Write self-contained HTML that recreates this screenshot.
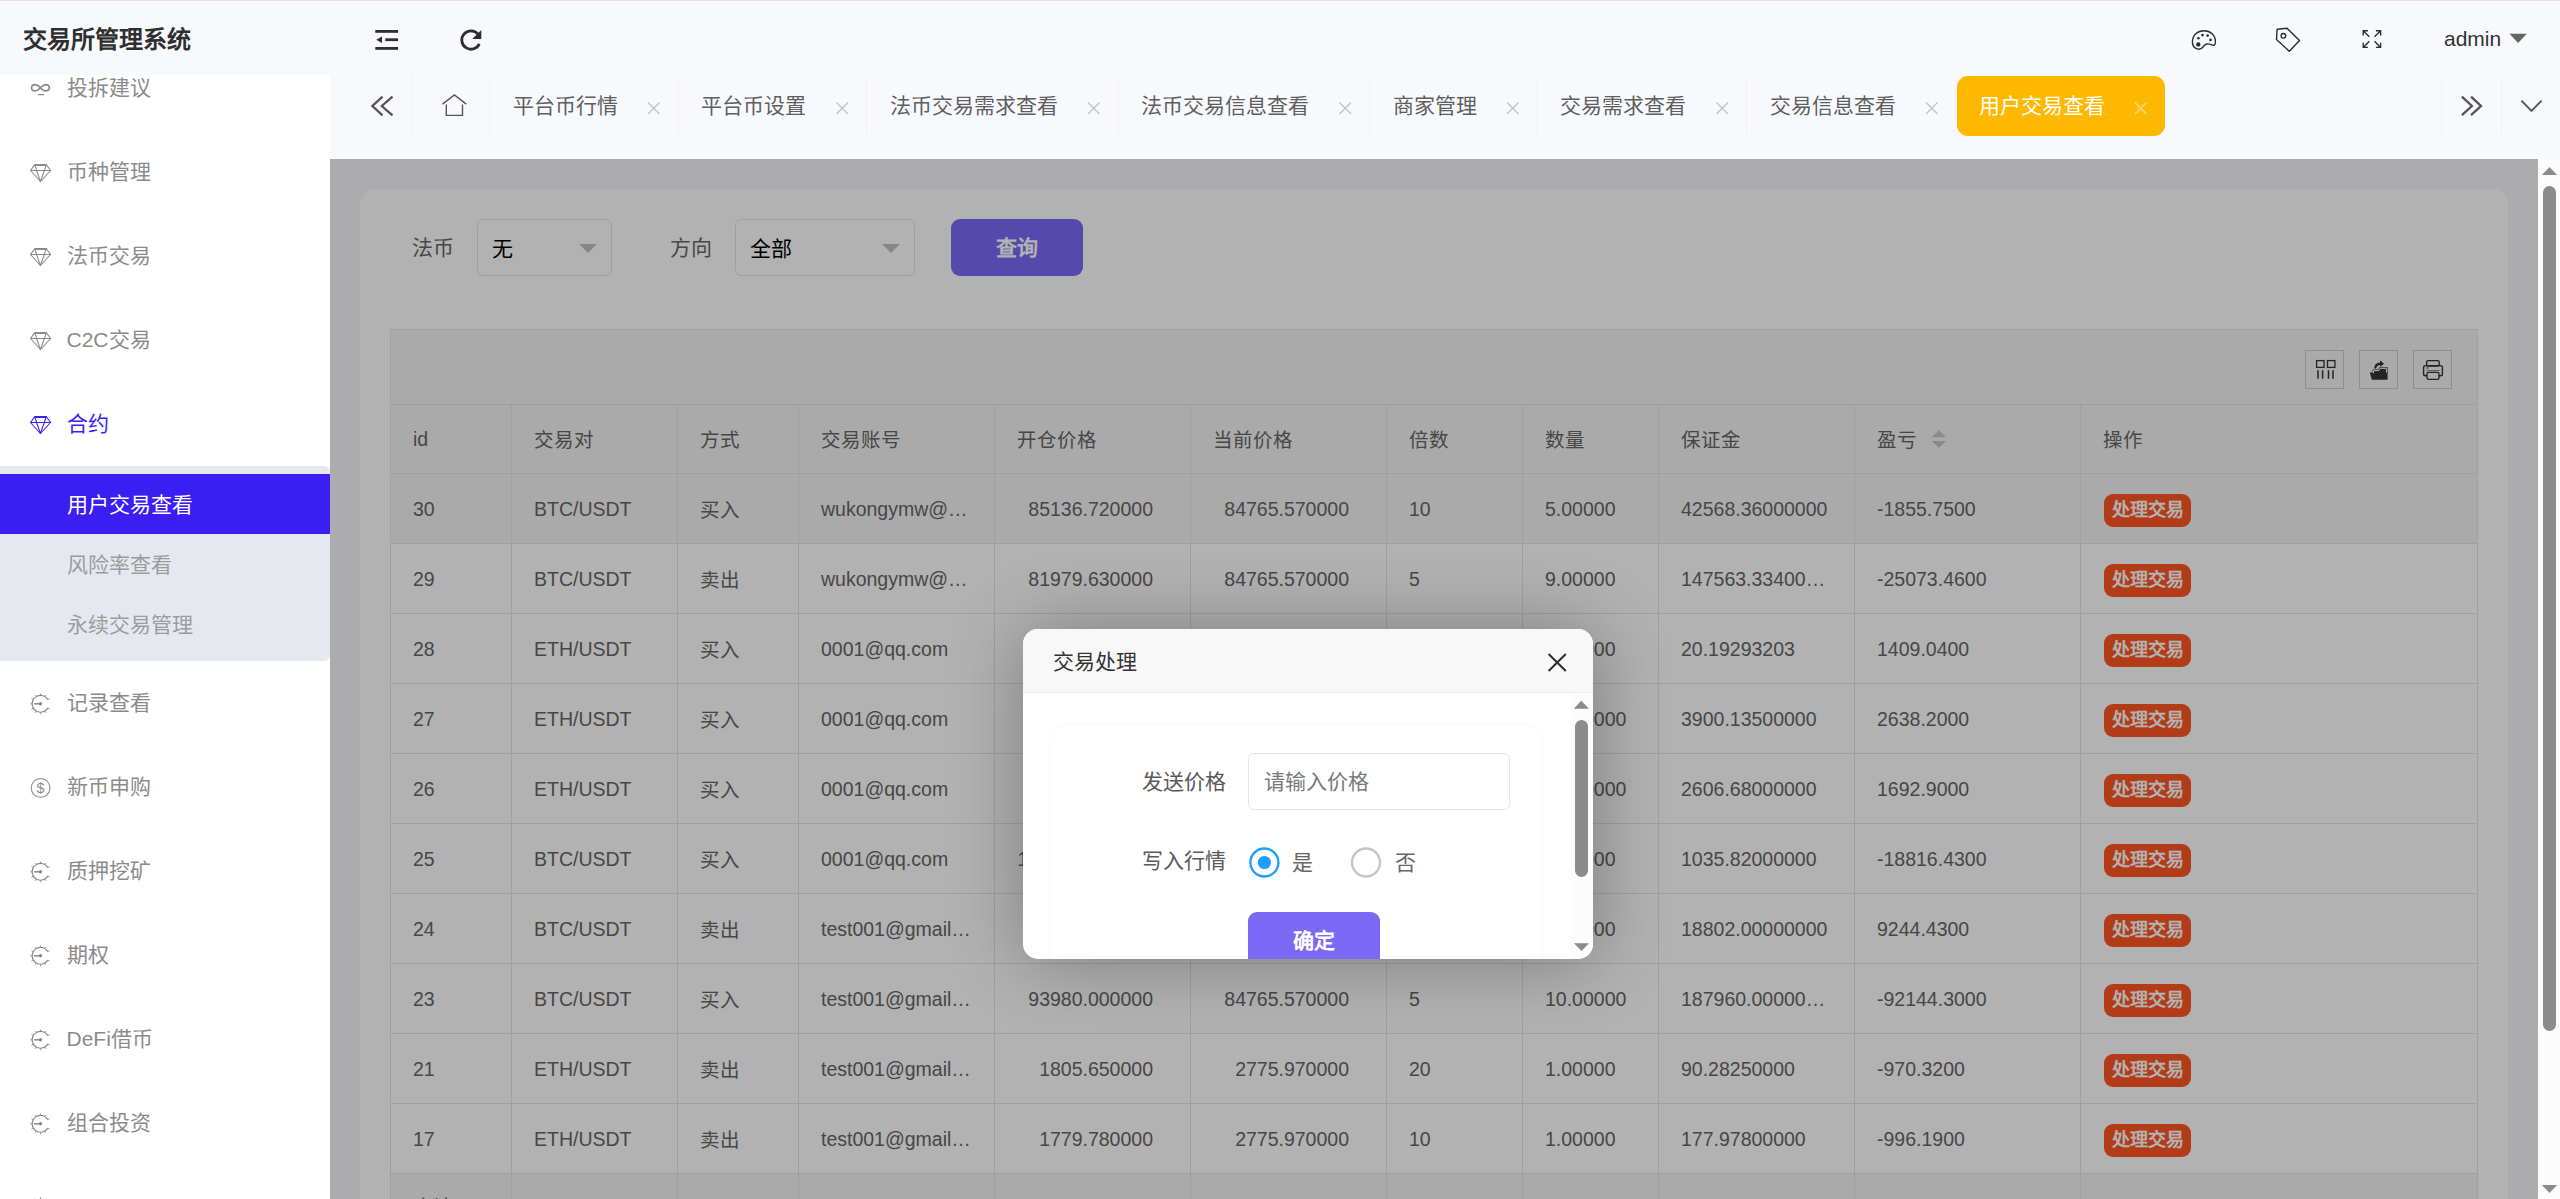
<!DOCTYPE html>
<html lang="zh-CN">
<head>
<meta charset="utf-8">
<title>交易所管理系统</title>
<style>
*{box-sizing:border-box;margin:0;padding:0}
html,body{width:2560px;height:1199px;overflow:hidden;background:#f8f9fd}
body{position:relative;font-family:"Liberation Sans",sans-serif;font-size:21px;color:#666;line-height:1}
.abs{position:absolute}
svg{display:block;overflow:visible}
.t{position:absolute;white-space:nowrap;line-height:30px;height:30px}

/* ---------- top ---------- */
#topline{position:absolute;left:0;top:0;width:2560px;height:1px;background:#f3dadb;z-index:50}
#topline2{position:absolute;left:0;top:1px;width:2560px;height:1px;background:#f9fcfe;z-index:50}
#logo{position:absolute;left:0;top:0;width:330px;height:75px;background:#f8f9fd;z-index:5}
#logo span{position:absolute;left:23px;top:25px;line-height:30px;font-size:24px;font-weight:bold;color:#2f2f2f;white-space:nowrap}
#header{position:absolute;left:0;top:0;width:2560px;height:159px;background:#f8f9fd}
#header .tab{color:#5f5f5f}
#acttab{position:absolute;left:1957px;top:76px;width:208px;height:60px;border-radius:11px;background:#ffb800}

/* ---------- sidebar ---------- */
#side{position:absolute;left:0;top:75px;width:330px;height:1124px;background:#fff;overflow:hidden}
#sg{position:absolute;left:0;top:-75px;width:330px;height:1199px}
.mi{position:absolute;left:66.5px;height:30px;line-height:30px;color:#8b8b8b;font-size:21px;white-space:nowrap}
.mi.on{color:#3a1ef2}
#sub{position:absolute;left:0;top:466px;width:330px;height:194.5px;background:#e6e8f0;border-radius:0 6px 6px 0}
.si{position:absolute;left:0;width:330px;height:60px;line-height:61px;color:#9c9c9c;white-space:nowrap;padding-left:66.5px}
.si.on{background:#3b1ff2;color:#fff}

/* ---------- frame ---------- */
#frame{position:absolute;left:330px;top:159px;width:2208px;height:1040px;overflow:hidden;background:#f7f7fa}
#g{position:absolute;left:-330px;top:-159px;width:2560px;height:1199px}
#card{position:absolute;left:360px;top:188.5px;width:2148px;height:1200px;background:#fff;border-radius:15px}
#shade{position:absolute;left:330px;top:159px;width:2208px;height:1040px;background:rgba(0,0,0,.3)}
#vscroll{position:absolute;left:2538px;top:159px;width:22px;height:1040px;background:#fcfcfc}

.sel{position:absolute;top:219px;height:57px;border:1px solid #e6e6e6;border-radius:6px;background:#fff;color:#000}
.sel span{position:absolute;left:14px;top:14px;line-height:30px}
.sel i{position:absolute;right:14px;top:24px;width:0;height:0;border-left:9px solid transparent;border-right:9px solid transparent;border-top:9px solid #c2c2c2}
.btn{position:absolute;background:#7a69f6;color:#fff;font-weight:bold;text-align:center;border-radius:9px}

/* ---------- table ---------- */
#tb{position:absolute;left:390px;top:329px;width:2088px;height:900px;border:1px solid #e6e6e6;border-bottom:none;background:#fff}
#tool{position:absolute;left:0;top:0;width:2086px;height:75px;background:#f4f4f4;border-bottom:1px solid #e6e6e6}
.tbx{position:absolute;top:21px;width:39px;height:39px;border:1px solid #ccc}
.row{position:absolute;left:0;width:2086px;height:70px;border-bottom:1px solid #e6e6e6;background:#fff}
.row.h,.row.hv{background:#f4f4f4}
.row.hd{height:69px}
.row.hd .c{height:68px;line-height:68px}
.row.hd .c.z{line-height:71px}
.c{position:absolute;top:0;height:69px;line-height:70px;font-size:19.5px;border-right:1px solid #e6e6e6;padding:0 22px;white-space:nowrap;overflow:hidden;color:#666}
.c.r{text-align:right;padding-right:37px}
.c.z{line-height:72px}
.c:last-child{border-right:none}
.ob{position:absolute;left:23px;top:20px;width:87px;height:33px;line-height:33px;border-radius:9px;background:#ff5722;color:#fff;font-size:18px;font-weight:bold;text-align:center}

/* ---------- modal ---------- */
#modal{position:absolute;left:1023px;top:629px;width:570px;height:330px;border-radius:15px;background:#fff;overflow:hidden;box-shadow:1.5px 1.5px 75px rgba(0,0,0,.3)}
#mg{position:absolute;left:-1023px;top:-629px;width:2560px;height:1199px}
#mtitle{position:absolute;left:1023px;top:629px;width:570px;height:64px;background:#f8f8f8;border-bottom:1px solid #eee}
</style>
</head>
<body>
<div id="header">
  <div id="acttab"></div>
  <!-- tab labels -->
  <div class="t tab" style="left:512.5px;top:91px">平台币行情</div>
  <div class="t tab" style="left:701px;top:91px">平台币设置</div>
  <div class="t tab" style="left:889.5px;top:91px">法币交易需求查看</div>
  <div class="t tab" style="left:1141px;top:91px">法币交易信息查看</div>
  <div class="t tab" style="left:1392.5px;top:91px">商家管理</div>
  <div class="t tab" style="left:1560px;top:91px">交易需求查看</div>
  <div class="t tab" style="left:1769.5px;top:91px">交易信息查看</div>
  <div class="t" style="left:1979px;top:91px;color:#fff">用户交易查看</div>
  <div class="t" style="left:2444px;top:24px;color:#333">admin</div>
  <svg class="abs" style="left:0;top:0" width="2560" height="159" viewBox="0 0 2560 159">
    <!-- menu fold -->
    <g fill="#2f2f2f">
      <rect x="375.3" y="30" width="22.8" height="2.8"/>
      <rect x="385.3" y="38.3" width="12.8" height="2.8"/>
      <rect x="375.3" y="47" width="22.8" height="2.8"/>
      <path d="M376.2 39.8L382 36.5V43.1Z"/>
    </g>
    <!-- refresh -->
    <path d="M479.34 43.89A9.2 9.2 0 1 1 478.05 34.09" fill="none" stroke="#2f2f2f" stroke-width="2.8"/>
    <path d="M481.3 30V39H472.2Z" fill="#2f2f2f"/>
    <!-- palette -->
    <g fill="none" stroke="#2b2b33" stroke-width="1.4" stroke-linejoin="round">
      <path d="M2199 49.3C2194.2 49.3 2192.4 45 2192.4 42C2192.4 35.2 2197.6 30.8 2204 30.8C2210.4 30.8 2215.4 35.4 2215.4 41.4C2215.4 43.4 2215 44.8 2214.4 45.2C2212 45.6 2210 43.2 2206.6 44C2203 45 2203 49.3 2199 49.3Z"/>
    </g>
    <g fill="#2b2b33">
      <circle cx="2198.4" cy="38.2" r="1.3"/><circle cx="2202.5" cy="35.1" r="1.3"/>
      <circle cx="2207.7" cy="35.6" r="1.3"/><circle cx="2210.5" cy="39.9" r="1.3"/>
      <circle cx="2198.3" cy="44.4" r="2.2"/>
    </g>
    <!-- tag -->
    <g fill="none" stroke="#2b2b33" stroke-width="1.4" stroke-linejoin="round">
      <path d="M2277.1 29.3L2287 28.3L2299.5 40.5L2289.3 51.3L2276.5 39.6Z"/>
      <circle cx="2283.4" cy="35.8" r="2.3"/>
    </g>
    <!-- fullscreen -->
    <g fill="none" stroke="#2b2b33" stroke-width="1.35">
      <path d="M2369.3 36.7L2363.2 30.7M2363.2 35.4V30.7H2367.9"/>
      <path d="M2374.5 36.7L2380.6 30.7M2375.9 30.7H2380.6V35.4"/>
      <path d="M2369.3 41.3L2363.2 47.4M2363.2 42.7V47.4H2367.9"/>
      <path d="M2374.5 41.3L2380.6 47.4M2375.9 47.4H2380.6V42.7"/>
    </g>
    <!-- admin caret -->
    <path d="M2509.5 33.8H2526.8L2518.1 43Z" fill="#666"/>
    <!-- separators -->
    <g stroke="#f2f2f5" stroke-width="1">
      <path d="M412.5 76V135M489.5 76V135M678 76V135M866.5 76V135M1118.5 76V135M1369.5 76V135M1537 76V135M1746.5 76V135M2441.5 76V135M2501.5 76V135"/>
    </g>
    <!-- << >> v -->
    <g fill="none" stroke="#555" stroke-width="2.3">
      <path d="M382.5 96.6L372.4 106L382.5 115.4M392.5 96.6L381.8 106L392.5 115.4"/>
      <path d="M2461.9 96.6L2471.9 106L2461.9 115.2M2471 96.6L2481 106L2471 115.2"/>
    </g>
    <path d="M2521.4 100.6L2531.5 111L2541.6 100.6" fill="none" stroke="#555" stroke-width="1.9"/>
    <!-- home -->
    <g fill="none" stroke="#555" stroke-width="1.4">
      <path d="M442.5 104.1L454.4 95L466.3 104.1"/>
      <path d="M446.3 104.4V115.4H462.5V104.4"/>
    </g>
    <!-- tab close icons -->
    <g fill="none" stroke="#b9c2c9" stroke-width="1.15">
      <path d="M648 102.5L659.5 114M659.5 102.5L648 114"/>
      <path d="M836.5 102.5L848 114M848 102.5L836.5 114"/>
      <path d="M1088 102.5L1099.5 114M1099.5 102.5L1088 114"/>
      <path d="M1339.5 102.5L1351 114M1351 102.5L1339.5 114"/>
      <path d="M1507 102.5L1518.5 114M1518.5 102.5L1507 114"/>
      <path d="M1716.5 102.5L1728 114M1728 102.5L1716.5 114"/>
      <path d="M1926 102.5L1937.5 114M1937.5 102.5L1926 114"/>
    </g>
    <path d="M2135 102.5L2146.5 114M2146.5 102.5L2135 114" fill="none" stroke="#ecdc9a" stroke-width="1.3"/>
  </svg>
</div>
<div id="topline"></div><div id="topline2"></div>
<div id="logo"><span>交易所管理系统</span></div>
<div id="side"><div id="sg">
<div id="sub"></div>
<div class="si on" style="top:474px">用户交易查看</div>
<div class="si" style="top:534px">风险率查看</div>
<div class="si" style="top:594px">永续交易管理</div>
<div class="mi" style="top:73px">投拆建议</div>
<div class="mi" style="top:157px">币种管理</div>
<div class="mi" style="top:241px">法币交易</div>
<div class="mi" style="top:325px">C2C交易</div>
<div class="mi on" style="top:409px">合约</div>
<div class="mi" style="top:688px">记录查看</div>
<div class="mi" style="top:772px">新币申购</div>
<div class="mi" style="top:856px">质押挖矿</div>
<div class="mi" style="top:940px">期权</div>
<div class="mi" style="top:1024px">DeFi借币</div>
<div class="mi" style="top:1108px">组合投资</div>
<svg class="abs" style="left:0;top:0" width="330" height="1199" viewBox="0 0 330 1199" fill="none" stroke-linecap="butt">
<path d="M31.6 87.8C31.6 85.6 33.3 84.7 35.3 84.7C38.6 84.7 42.2 90.89999999999999 45.6 90.89999999999999C47.6 90.89999999999999 49.3 89.89999999999999 49.3 87.8C49.3 85.6 47.6 84.7 45.6 84.7C42.2 84.7 38.6 90.89999999999999 35.3 90.89999999999999C33.3 90.89999999999999 31.6 89.89999999999999 31.6 87.8Z" stroke="#8b8b8b" stroke-width="1.7"/>
<path d="M37.8 94.6H44" stroke="#8b8b8b" stroke-width="1.3"/>
<g stroke="#8b8b8b" stroke-width="1.05" stroke-linejoin="round"><path d="M34.8 164.6H46.3L50.6 170.5L40.4 181.5L30.5 170.5Z"/><path d="M30.5 170.5H50.6M34.8 164.6L36.6 170.5L40.4 181.5L44.3 170.5L46.3 164.6"/><path d="M34.8 165.4H46.3" stroke-width="1.2"/></g>
<g stroke="#8b8b8b" stroke-width="1.05" stroke-linejoin="round"><path d="M34.8 248.6H46.3L50.6 254.5L40.4 265.5L30.5 254.5Z"/><path d="M30.5 254.5H50.6M34.8 248.6L36.6 254.5L40.4 265.5L44.3 254.5L46.3 248.6"/><path d="M34.8 249.4H46.3" stroke-width="1.2"/></g>
<g stroke="#8b8b8b" stroke-width="1.05" stroke-linejoin="round"><path d="M34.8 332.6H46.3L50.6 338.5L40.4 349.5L30.5 338.5Z"/><path d="M30.5 338.5H50.6M34.8 332.6L36.6 338.5L40.4 349.5L44.3 338.5L46.3 332.6"/><path d="M34.8 333.40000000000003H46.3" stroke-width="1.2"/></g>
<g stroke="#3a1ef2" stroke-width="1.05" stroke-linejoin="round"><path d="M34.8 416.6H46.3L50.6 422.5L40.4 433.5L30.5 422.5Z"/><path d="M30.5 422.5H50.6M34.8 416.6L36.6 422.5L40.4 433.5L44.3 422.5L46.3 416.6"/><path d="M34.8 417.40000000000003H46.3" stroke-width="1.2"/></g>
<g stroke="#8b8b8b" stroke-width="1.12"><path d="M47.82 699.60A8.4 8.4 0 1 0 47.82 708.00"/><path d="M47.82 708.00L49.56 709.00M44.75 711.07L45.75 712.81M40.55 712.20L40.55 714.20M36.35 711.07L35.35 712.81M33.28 708.00L31.54 709.00M32.15 703.80L30.15 703.80M33.28 699.60L31.54 698.60M36.35 696.53L35.35 694.79M40.55 695.40L40.55 693.40M44.75 696.53L45.75 694.79M47.82 699.60L49.56 698.60" stroke-width="0.9"/><path d="M33.9 703.8H40.4" stroke-width="1.5"/></g><circle cx="40.5" cy="703.8" r="1.7" fill="#8b8b8b"/>
<circle cx="40.6" cy="787.9" r="9.4" stroke="#8b8b8b" stroke-width="1.05"/>
<text x="40.6" y="793.1" text-anchor="middle" font-family="Liberation Sans, sans-serif" font-size="14.5" fill="#8b8b8b" stroke="none">$</text>
<g stroke="#8b8b8b" stroke-width="1.12"><path d="M47.82 867.60A8.4 8.4 0 1 0 47.82 876.00"/><path d="M47.82 876.00L49.56 877.00M44.75 879.07L45.75 880.81M40.55 880.20L40.55 882.20M36.35 879.07L35.35 880.81M33.28 876.00L31.54 877.00M32.15 871.80L30.15 871.80M33.28 867.60L31.54 866.60M36.35 864.53L35.35 862.79M40.55 863.40L40.55 861.40M44.75 864.53L45.75 862.79M47.82 867.60L49.56 866.60" stroke-width="0.9"/><path d="M33.9 871.8H40.4" stroke-width="1.5"/></g><circle cx="40.5" cy="871.8" r="1.7" fill="#8b8b8b"/>
<g stroke="#8b8b8b" stroke-width="1.12"><path d="M47.82 951.60A8.4 8.4 0 1 0 47.82 960.00"/><path d="M47.82 960.00L49.56 961.00M44.75 963.07L45.75 964.81M40.55 964.20L40.55 966.20M36.35 963.07L35.35 964.81M33.28 960.00L31.54 961.00M32.15 955.80L30.15 955.80M33.28 951.60L31.54 950.60M36.35 948.53L35.35 946.79M40.55 947.40L40.55 945.40M44.75 948.53L45.75 946.79M47.82 951.60L49.56 950.60" stroke-width="0.9"/><path d="M33.9 955.8H40.4" stroke-width="1.5"/></g><circle cx="40.5" cy="955.8" r="1.7" fill="#8b8b8b"/>
<g stroke="#8b8b8b" stroke-width="1.12"><path d="M47.82 1035.60A8.4 8.4 0 1 0 47.82 1044.00"/><path d="M47.82 1044.00L49.56 1045.00M44.75 1047.07L45.75 1048.81M40.55 1048.20L40.55 1050.20M36.35 1047.07L35.35 1048.81M33.28 1044.00L31.54 1045.00M32.15 1039.80L30.15 1039.80M33.28 1035.60L31.54 1034.60M36.35 1032.53L35.35 1030.79M40.55 1031.40L40.55 1029.40M44.75 1032.53L45.75 1030.79M47.82 1035.60L49.56 1034.60" stroke-width="0.9"/><path d="M33.9 1039.8H40.4" stroke-width="1.5"/></g><circle cx="40.5" cy="1039.8" r="1.7" fill="#8b8b8b"/>
<g stroke="#8b8b8b" stroke-width="1.12"><path d="M47.82 1119.60A8.4 8.4 0 1 0 47.82 1128.00"/><path d="M47.82 1128.00L49.56 1129.00M44.75 1131.07L45.75 1132.81M40.55 1132.20L40.55 1134.20M36.35 1131.07L35.35 1132.81M33.28 1128.00L31.54 1129.00M32.15 1123.80L30.15 1123.80M33.28 1119.60L31.54 1118.60M36.35 1116.53L35.35 1114.79M40.55 1115.40L40.55 1113.40M44.75 1116.53L45.75 1114.79M47.82 1119.60L49.56 1118.60" stroke-width="0.9"/><path d="M33.9 1123.8H40.4" stroke-width="1.5"/></g><circle cx="40.5" cy="1123.8" r="1.7" fill="#8b8b8b"/>
<g stroke="#8b8b8b" stroke-width="1.12"><path d="M47.82 1203.60A8.4 8.4 0 1 0 47.82 1212.00"/><path d="M47.82 1212.00L49.56 1213.00M44.75 1215.07L45.75 1216.81M40.55 1216.20L40.55 1218.20M36.35 1215.07L35.35 1216.81M33.28 1212.00L31.54 1213.00M32.15 1207.80L30.15 1207.80M33.28 1203.60L31.54 1202.60M36.35 1200.53L35.35 1198.79M40.55 1199.40L40.55 1197.40M44.75 1200.53L45.75 1198.79M47.82 1203.60L49.56 1202.60" stroke-width="0.9"/><path d="M33.9 1207.8H40.4" stroke-width="1.5"/></g><circle cx="40.5" cy="1207.8" r="1.7" fill="#8b8b8b"/>
</svg>
</div></div>
<div id="frame"><div id="g">
<div id="card"></div>
<div class="t" style="left:412px;top:233px;color:#666">法币</div>
<div class="sel" style="left:477px;width:135px"><span>无</span><i></i></div>
<div class="t" style="left:670px;top:233px;color:#666">方向</div>
<div class="sel" style="left:735px;width:180px"><span>全部</span><i></i></div>
<div class="btn" style="left:951px;top:219px;width:132px;height:57px;line-height:57px">查询</div>
<div id="tb"><div id="tool">
<div class="tbx" style="left:1914px;top:20px"></div>
<div class="tbx" style="left:1968px;top:20px"></div>
<div class="tbx" style="left:2022px;top:20px"></div>
</div>
<div class="row h hd" style="top:75px"><div class="c" style="left:0px;width:121px">id</div><div class="c z" style="left:121px;width:166px">交易对</div><div class="c z" style="left:287px;width:121px">方式</div><div class="c z" style="left:408px;width:196px">交易账号</div><div class="c z" style="left:604px;width:196px">开仓价格</div><div class="c z" style="left:800px;width:196px">当前价格</div><div class="c z" style="left:996px;width:136px">倍数</div><div class="c z" style="left:1132px;width:136px">数量</div><div class="c z" style="left:1268px;width:196px">保证金</div><div class="c z" style="left:1464px;width:226px">盈亏</div><div class="c z" style="left:1690px;width:396px">操作</div></div>
<div class="row hv" style="top:144px"><div class="c" style="left:0px;width:121px">30</div><div class="c" style="left:121px;width:166px">BTC/USDT</div><div class="c z" style="left:287px;width:121px">买入</div><div class="c" style="left:408px;width:196px;text-overflow:ellipsis">wukongymw@gmail.com</div><div class="c r" style="left:604px;width:196px">85136.720000</div><div class="c r" style="left:800px;width:196px">84765.570000</div><div class="c" style="left:996px;width:136px">10</div><div class="c" style="left:1132px;width:136px">5.00000</div><div class="c" style="left:1268px;width:196px;text-overflow:ellipsis">42568.36000000</div><div class="c" style="left:1464px;width:226px">-1855.7500</div><div class="c" style="left:1690px;width:396px"><span class="ob">处理交易</span></div></div>
<div class="row" style="top:214px"><div class="c" style="left:0px;width:121px">29</div><div class="c" style="left:121px;width:166px">BTC/USDT</div><div class="c z" style="left:287px;width:121px">卖出</div><div class="c" style="left:408px;width:196px;text-overflow:ellipsis">wukongymw@gmail.com</div><div class="c r" style="left:604px;width:196px">81979.630000</div><div class="c r" style="left:800px;width:196px">84765.570000</div><div class="c" style="left:996px;width:136px">5</div><div class="c" style="left:1132px;width:136px">9.00000</div><div class="c" style="left:1268px;width:196px;text-overflow:ellipsis">147563.33400000</div><div class="c" style="left:1464px;width:226px">-25073.4600</div><div class="c" style="left:1690px;width:396px"><span class="ob">处理交易</span></div></div>
<div class="row" style="top:284px"><div class="c" style="left:0px;width:121px">28</div><div class="c" style="left:121px;width:166px">ETH/USDT</div><div class="c z" style="left:287px;width:121px">买入</div><div class="c" style="left:408px;width:196px;text-overflow:ellipsis">0001@qq.com</div><div class="c r" style="left:604px;width:196px">2019.293203</div><div class="c r" style="left:800px;width:196px">2775.970000</div><div class="c" style="left:996px;width:136px">100</div><div class="c" style="left:1132px;width:136px">1.00000</div><div class="c" style="left:1268px;width:196px;text-overflow:ellipsis">20.19293203</div><div class="c" style="left:1464px;width:226px">1409.0400</div><div class="c" style="left:1690px;width:396px"><span class="ob">处理交易</span></div></div>
<div class="row" style="top:354px"><div class="c" style="left:0px;width:121px">27</div><div class="c" style="left:121px;width:166px">ETH/USDT</div><div class="c z" style="left:287px;width:121px">买入</div><div class="c" style="left:408px;width:196px;text-overflow:ellipsis">0001@qq.com</div><div class="c r" style="left:604px;width:196px">2512.150000</div><div class="c r" style="left:800px;width:196px">2775.970000</div><div class="c" style="left:996px;width:136px">5</div><div class="c" style="left:1132px;width:136px">10.00000</div><div class="c" style="left:1268px;width:196px;text-overflow:ellipsis">3900.13500000</div><div class="c" style="left:1464px;width:226px">2638.2000</div><div class="c" style="left:1690px;width:396px"><span class="ob">处理交易</span></div></div>
<div class="row" style="top:424px"><div class="c" style="left:0px;width:121px">26</div><div class="c" style="left:121px;width:166px">ETH/USDT</div><div class="c z" style="left:287px;width:121px">买入</div><div class="c" style="left:408px;width:196px;text-overflow:ellipsis">0001@qq.com</div><div class="c r" style="left:604px;width:196px">2606.680000</div><div class="c r" style="left:800px;width:196px">2775.970000</div><div class="c" style="left:996px;width:136px">10</div><div class="c" style="left:1132px;width:136px">10.00000</div><div class="c" style="left:1268px;width:196px;text-overflow:ellipsis">2606.68000000</div><div class="c" style="left:1464px;width:226px">1692.9000</div><div class="c" style="left:1690px;width:396px"><span class="ob">处理交易</span></div></div>
<div class="row" style="top:494px"><div class="c" style="left:0px;width:121px">25</div><div class="c" style="left:121px;width:166px">BTC/USDT</div><div class="c z" style="left:287px;width:121px">买入</div><div class="c" style="left:408px;width:196px;text-overflow:ellipsis">0001@qq.com</div><div class="c r" style="left:604px;width:196px">103582.000000</div><div class="c r" style="left:800px;width:196px">84765.570000</div><div class="c" style="left:996px;width:136px">100</div><div class="c" style="left:1132px;width:136px">1.00000</div><div class="c" style="left:1268px;width:196px;text-overflow:ellipsis">1035.82000000</div><div class="c" style="left:1464px;width:226px">-18816.4300</div><div class="c" style="left:1690px;width:396px"><span class="ob">处理交易</span></div></div>
<div class="row" style="top:564px"><div class="c" style="left:0px;width:121px">24</div><div class="c" style="left:121px;width:166px">BTC/USDT</div><div class="c z" style="left:287px;width:121px">卖出</div><div class="c" style="left:408px;width:196px;text-overflow:ellipsis">test001@gmail.com</div><div class="c r" style="left:604px;width:196px">94010.000000</div><div class="c r" style="left:800px;width:196px">84765.570000</div><div class="c" style="left:996px;width:136px">10</div><div class="c" style="left:1132px;width:136px">2.00000</div><div class="c" style="left:1268px;width:196px;text-overflow:ellipsis">18802.00000000</div><div class="c" style="left:1464px;width:226px">9244.4300</div><div class="c" style="left:1690px;width:396px"><span class="ob">处理交易</span></div></div>
<div class="row" style="top:634px"><div class="c" style="left:0px;width:121px">23</div><div class="c" style="left:121px;width:166px">BTC/USDT</div><div class="c z" style="left:287px;width:121px">买入</div><div class="c" style="left:408px;width:196px;text-overflow:ellipsis">test001@gmail.com</div><div class="c r" style="left:604px;width:196px">93980.000000</div><div class="c r" style="left:800px;width:196px">84765.570000</div><div class="c" style="left:996px;width:136px">5</div><div class="c" style="left:1132px;width:136px">10.00000</div><div class="c" style="left:1268px;width:196px;text-overflow:ellipsis">187960.00000000</div><div class="c" style="left:1464px;width:226px">-92144.3000</div><div class="c" style="left:1690px;width:396px"><span class="ob">处理交易</span></div></div>
<div class="row" style="top:704px"><div class="c" style="left:0px;width:121px">21</div><div class="c" style="left:121px;width:166px">ETH/USDT</div><div class="c z" style="left:287px;width:121px">卖出</div><div class="c" style="left:408px;width:196px;text-overflow:ellipsis">test001@gmail.com</div><div class="c r" style="left:604px;width:196px">1805.650000</div><div class="c r" style="left:800px;width:196px">2775.970000</div><div class="c" style="left:996px;width:136px">20</div><div class="c" style="left:1132px;width:136px">1.00000</div><div class="c" style="left:1268px;width:196px;text-overflow:ellipsis">90.28250000</div><div class="c" style="left:1464px;width:226px">-970.3200</div><div class="c" style="left:1690px;width:396px"><span class="ob">处理交易</span></div></div>
<div class="row" style="top:774px"><div class="c" style="left:0px;width:121px">17</div><div class="c" style="left:121px;width:166px">ETH/USDT</div><div class="c z" style="left:287px;width:121px">卖出</div><div class="c" style="left:408px;width:196px;text-overflow:ellipsis">test001@gmail.com</div><div class="c r" style="left:604px;width:196px">1779.780000</div><div class="c r" style="left:800px;width:196px">2775.970000</div><div class="c" style="left:996px;width:136px">10</div><div class="c" style="left:1132px;width:136px">1.00000</div><div class="c" style="left:1268px;width:196px;text-overflow:ellipsis">177.97800000</div><div class="c" style="left:1464px;width:226px">-996.1900</div><div class="c" style="left:1690px;width:396px"><span class="ob">处理交易</span></div></div>
<div class="row h" style="top:844px"><div class="c" style="left:0px;width:121px"></div><div class="c z" style="left:121px;width:166px"></div><div class="c z" style="left:287px;width:121px"></div><div class="c z" style="left:408px;width:196px"></div><div class="c z" style="left:604px;width:196px"></div><div class="c z" style="left:800px;width:196px"></div><div class="c z" style="left:996px;width:136px"></div><div class="c z" style="left:1132px;width:136px"></div><div class="c z" style="left:1268px;width:196px"></div><div class="c z" style="left:1464px;width:226px"></div><div class="c z" style="left:1690px;width:396px"></div></div>
</div>
<svg class="abs" style="left:0;top:0" width="2560" height="1199" viewBox="0 0 2560 1199" fill="none">
<g stroke="#333" stroke-width="1.3">
<rect x="2316.6" y="360.6" width="7.4" height="6.8"/><rect x="2327.5" y="360.6" width="7.4" height="6.8"/>
<path d="M2318 370.2V378.7M2322.6 370.2V378.7M2328.5 370.2V378.7M2333 370.2V378.7" stroke-width="1.5"/>
</g>
<g fill="#333">
<path d="M2369.8 372.4H2372.6V369.6H2378.3L2379.4 367.3H2387.6V379.7H2371.8Z"/>
<path d="M2374.3 368.6C2374.3 364.6 2376.6 362.6 2380.2 362.5V360.3L2384 363.7L2380.2 367V364.9C2378 365 2376.6 366 2376.2 368.6Z"/>
</g>
<path d="M2373.5 373.2V370.6H2379L2380.1 368.4H2386.4V372.6" stroke="#fff" stroke-width="1"/>
<g stroke="#333" stroke-width="1.4" stroke-linejoin="round">
<rect x="2426.6" y="360.6" width="12.6" height="5.4" rx="1.6"/>
<rect x="2423.6" y="365.6" width="18.8" height="10.2" rx="1.8"/>
<rect x="2427" y="372.4" width="12" height="7" rx="1.6" fill="#f4f4f4"/>
<path d="M2426.4 368H2428.6" stroke-width="1"/><path d="M2426.4 370.6H2439.6" stroke-width="0.6"/>
</g>
<path d="M1931.7 437.2H1946L1938.9 430.2Z" fill="#c6c6c6"/><path d="M1931.7 441H1946L1938.9 448.1Z" fill="#c6c6c6"/>
</svg>
<div class="t" style="left:413px;top:1192px;font-size:19.5px;color:#666">合计</div>
<div id="shade"></div>
<div id="modal"><div id="mg">
  <div id="mtitle"></div>
  <div class="t" style="left:1053px;top:647px;color:#333">交易处理</div>
  <!-- inner card -->
  <div class="abs" style="left:1052px;top:726px;width:489px;height:400px;border-radius:15px;background:#fff;box-shadow:0 0 6px rgba(0,0,0,.035)"></div>
  <!-- scrollbar track -->
  <div class="abs" style="left:1570.5px;top:693px;width:22.5px;height:266px;background:#fcfcfc"></div>
  <div class="abs" style="left:1575px;top:719.5px;width:13px;height:157.5px;border-radius:6.5px;background:#8b8b8b"></div>
  <div class="t" style="left:1141.5px;top:767px;color:#5a5a5a">发送价格</div>
  <div class="abs" style="left:1248px;top:753px;width:262px;height:57px;border:1px solid #e6e6e6;border-radius:6px;background:#fff"></div>
  <div class="t" style="left:1264px;top:767px;color:#7a7a7a">请输入价格</div>
  <div class="t" style="left:1141.5px;top:845.5px;color:#5a5a5a">写入行情</div>
  <div class="t" style="left:1292px;top:848px;color:#666">是</div>
  <div class="t" style="left:1394.5px;top:848px;color:#666">否</div>
  <div class="btn" style="left:1248px;top:912px;width:132px;height:57px;line-height:57px;background:#7b68f5">确定</div>
  <svg class="abs" style="left:0;top:0" width="2560" height="1199" viewBox="0 0 2560 1199" fill="none">
    <path d="M1548.6 654L1565.8 671M1565.8 654L1548.6 671" stroke="#2e2e2e" stroke-width="2"/>
    <path d="M1573.8 708.8H1588.8L1581.3 700.8Z" fill="#8b8b8b"/>
    <path d="M1574 943.2H1589L1581.5 951Z" fill="#8b8b8b"/>
    <circle cx="1264.4" cy="862.5" r="14" stroke="#1e9fff" stroke-width="2.3"/>
    <circle cx="1264.4" cy="862.5" r="6.6" fill="#1e9fff"/>
    <circle cx="1366" cy="862.5" r="14" stroke="#c4c4c4" stroke-width="2.3"/>
  </svg>
</div></div>
</div></div><!-- /g /frame -->
<div id="vscroll">
  <div class="abs" style="left:5px;top:27px;width:13px;height:845px;border-radius:6.5px;background:#8b8b8b"></div>
  <svg class="abs" style="left:0;top:0" width="22" height="1040" viewBox="0 0 22 1040">
    <path d="M3.9 16H19.1L11.5 8Z" fill="#8b8b8b"/>
    <path d="M3.9 1026H19.1L11.5 1034Z" fill="#8b8b8b"/>
  </svg>
</div>
</body>
</html>
